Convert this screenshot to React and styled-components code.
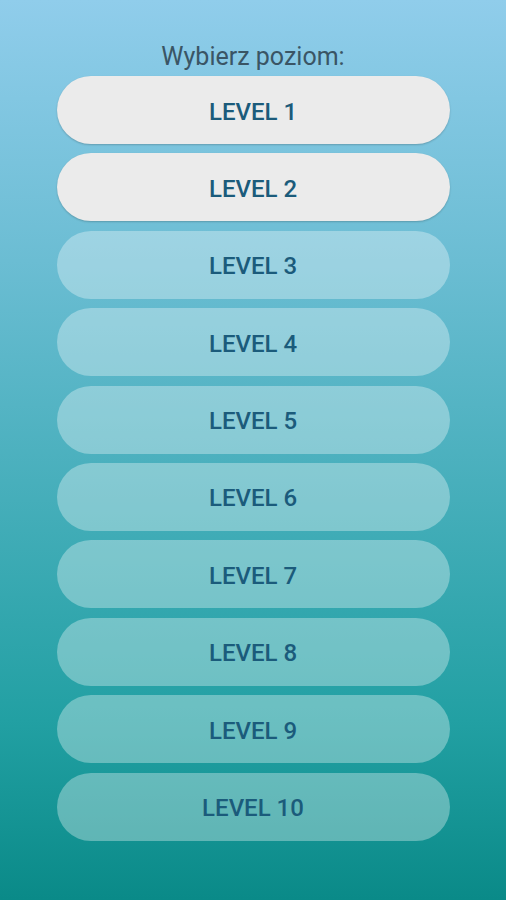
import React from 'react';
import styled, { createGlobalStyle } from 'styled-components';

const GlobalStyle = createGlobalStyle`
    html, body {
        margin: 0;
        padding: 0;
        height: 100%;
    }
    body {
        font-family: Roboto, "Noto Sans", sans-serif;
    }
    #root {
        min-height: 100%;
    }
`;

const Screen = styled.div`
    width: 506px;
    height: 900px;
    box-sizing: border-box;
    padding-top: 41px;
    display: flex;
    flex-direction: column;
    align-items: center;
    background: linear-gradient(180deg, #90cdeb 0%, #6bbdd3 29%, #22a0a3 80%, #0a8a88 100%);
    overflow: hidden;
`;

const Title = styled.h1`
    margin: 0 0 4px;
    font-size: 25px;
    line-height: 31px;
    font-weight: 400;
    color: #3a5565;
`;

const LevelList = styled.div`
    display: flex;
    flex-direction: column;
    gap: 9.4px;
    width: 393px;
`;

const LevelButton = styled.button`
    height: 68px;
    width: 100%;
    padding: 3px 0 0;
    border: none;
    border-radius: 34px;
    font-family: Roboto, "Noto Sans", sans-serif;
    font-size: 24px;
    font-weight: 500;
    color: #1b5b7b;
    background: ${props => props.$unlocked ? '#ebebeb' : 'rgba(255, 255, 255, 0.33)'};
    box-shadow: ${props => props.$unlocked ? '0 1px 2px rgba(0,0,0,0.2)' : 'none'};
    cursor: pointer;
`;

const levels = [1, 2, 3, 4, 5, 6, 7, 8, 9, 10];

const App = () => {
    return (
        <>
            <GlobalStyle />
            <Screen>
                <Title>Wybierz poziom:</Title>
                <LevelList>
                    {levels.map(n => (
                        <LevelButton key={n} $unlocked={n <= 2}>LEVEL {n}</LevelButton>
                    ))}
                </LevelList>
            </Screen>
        </>
    );
};

export default App;
